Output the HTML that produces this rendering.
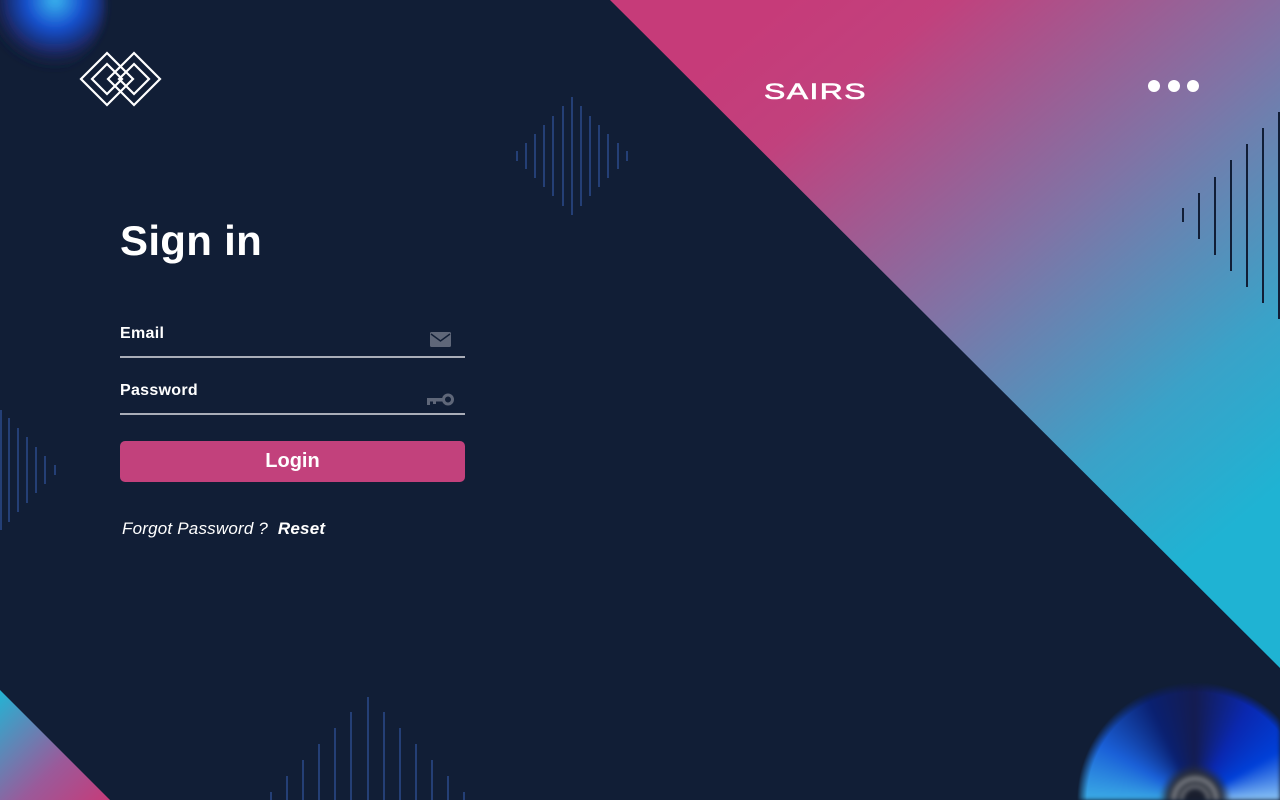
<!DOCTYPE html>
<html><head><meta charset="utf-8"><style>
*{margin:0;padding:0;box-sizing:border-box}
html,body{width:1280px;height:800px;overflow:hidden}
body{background:#111e36;font-family:"Liberation Sans",sans-serif;color:#fff}
#w{position:relative;width:1280px;height:800px;overflow:hidden;background:#111e36}
.abs{position:absolute}
svg{position:absolute;left:0;top:0}
.label{position:absolute;left:120px;font-size:16px;font-weight:bold;letter-spacing:0.3px}
.line{position:absolute;left:120px;width:345px;height:2px;background:#a9adb8}
#disc{left:1070px;top:675px;width:210px;height:125px;
background:radial-gradient(circle at 125px 125px,#1a1f2e 0 10px,#70737a 13px,#2a2f3a 17px,#80838a 21px,#2a2f3a 26px,rgba(26,32,64,0) 36px),
conic-gradient(from 0deg at 125px 125px,#141c50 0deg,#0a28b0 30deg,#0040d8 60deg,#b8f0ff 100deg,#e0f8ff 130deg,#60c8f0 180deg,#c050d0 230deg,#40b8e8 265deg,#1a60d8 300deg,#0a2070 335deg,#141c50 360deg);
-webkit-mask-image:radial-gradient(circle at 125px 125px,#000 108px,transparent 118px);
mask-image:radial-gradient(circle at 125px 125px,#000 108px,transparent 118px);filter:blur(2px)}
</style></head><body><div id="w">
<svg width="1280" height="800" viewBox="0 0 1280 800">
<defs>
<linearGradient id="g1" gradientUnits="userSpaceOnUse" x1="800" y1="-10" x2="1240" y2="520">
<stop offset="0" stop-color="#c63b79"/><stop offset="0.15" stop-color="#c1417d"/><stop offset="0.5" stop-color="#7f74a6"/><stop offset="0.8" stop-color="#3aa2c8"/><stop offset="1" stop-color="#1fb3d3"/>
</linearGradient>
<linearGradient id="g2" x1="0" y1="0" x2="1" y2="1">
<stop offset="0" stop-color="#22b4d4"/><stop offset="0.6" stop-color="#9a5a9a"/><stop offset="1" stop-color="#c63b79"/>
</linearGradient>
<radialGradient id="tl" cx="55" cy="0" r="70" gradientUnits="userSpaceOnUse">
<stop offset="0" stop-color="#3ab8ee"/><stop offset="0.4" stop-color="#1850d0"/><stop offset="0.75" stop-color="#1a2660"/><stop offset="1" stop-color="#111e36" stop-opacity="0"/>
</radialGradient>
<filter id="bl"><feGaussianBlur stdDeviation="4"/></filter>
</defs>
<polygon points="610,0 1280,0 1280,668" fill="url(#g1)"/>
<polygon points="0,690 110,800 0,800" fill="url(#g2)"/>
<circle cx="35" cy="5" r="70" fill="url(#tl)" filter="url(#bl)"/>
<g stroke="#2b4a8c" stroke-width="1.5">
<line x1="517" y1="151" x2="517" y2="161"/><line x1="526" y1="143" x2="526" y2="169"/><line x1="535" y1="134" x2="535" y2="178"/><line x1="544" y1="125" x2="544" y2="187"/><line x1="553" y1="116" x2="553" y2="196"/><line x1="563" y1="106" x2="563" y2="206"/><line x1="572" y1="97" x2="572" y2="215"/><line x1="581" y1="106" x2="581" y2="206"/><line x1="590" y1="116" x2="590" y2="196"/><line x1="599" y1="125" x2="599" y2="187"/><line x1="608" y1="134" x2="608" y2="178"/><line x1="618" y1="143" x2="618" y2="169"/><line x1="627" y1="151" x2="627" y2="161"/>
<line x1="1" y1="410" x2="1" y2="530"/><line x1="9" y1="418" x2="9" y2="522"/><line x1="18" y1="428" x2="18" y2="512"/><line x1="27" y1="437" x2="27" y2="503"/><line x1="36" y1="447" x2="36" y2="493"/><line x1="45" y1="456" x2="45" y2="484"/><line x1="55" y1="465" x2="55" y2="475"/>
<line x1="271" y1="792" x2="271" y2="800"/><line x1="287" y1="776" x2="287" y2="800"/><line x1="303" y1="760" x2="303" y2="800"/><line x1="319" y1="744" x2="319" y2="800"/><line x1="335" y1="728" x2="335" y2="800"/><line x1="351" y1="712" x2="351" y2="800"/><line x1="368" y1="697" x2="368" y2="800"/><line x1="384" y1="712" x2="384" y2="800"/><line x1="400" y1="728" x2="400" y2="800"/><line x1="416" y1="744" x2="416" y2="800"/><line x1="432" y1="760" x2="432" y2="800"/><line x1="448" y1="776" x2="448" y2="800"/><line x1="464" y1="792" x2="464" y2="800"/>
</g>
<g stroke="#111e36" stroke-width="2">
<line x1="1183" y1="208" x2="1183" y2="222"/><line x1="1199" y1="193" x2="1199" y2="239"/><line x1="1215" y1="177" x2="1215" y2="255"/><line x1="1231" y1="160" x2="1231" y2="271"/><line x1="1247" y1="144" x2="1247" y2="287"/><line x1="1263" y1="128" x2="1263" y2="303"/><line x1="1279" y1="112" x2="1279" y2="319"/>
</g>
<g fill="none" stroke="#fff" stroke-width="2.2">
<polygon points="107,53 133,79 107,105 81,79"/>
<polygon points="107,64 122,79 107,94 92,79"/>
<polygon points="134,53 160,79 134,105 108,79"/>
<polygon points="134,64 149,79 134,94 119,79"/>
</g>
<g fill="#ffffff">
<circle cx="1154" cy="86" r="6"/><circle cx="1174" cy="86" r="6"/><circle cx="1193" cy="86" r="6"/>
</g>
<rect x="430" y="332" width="21" height="15" rx="1.5" fill="#5f6779"/>
<polyline points="431,334 440.5,341 450,334" fill="none" stroke="#111e36" stroke-width="1.5"/>
<g fill="#5f6779">
<rect x="427" y="398" width="16" height="3.5"/><rect x="427" y="398" width="3" height="7"/><rect x="433" y="398" width="3" height="6"/>
</g>
<circle cx="448" cy="399.5" r="4.5" fill="none" stroke="#5f6779" stroke-width="3"/>
</svg>
<div class="abs" id="disc"></div>
<div class="abs" style="left:764px;top:80px;font-size:22px;letter-spacing:1px;transform:scaleX(1.45);transform-origin:left;line-height:24px;-webkit-text-stroke:0.6px #fff">SAIRS</div>
<div class="abs" style="left:120px;top:216px;font-size:42px;font-weight:bold;letter-spacing:0.3px;line-height:50px">Sign in</div>
<div class="label" style="top:325px">Email</div>
<div class="line" style="top:356px"></div>
<div class="label" style="top:382px">Password</div>
<div class="line" style="top:413px"></div>
<div class="abs" style="left:120px;top:441px;width:345px;height:41px;border-radius:5px;background:#c2417c;text-align:center;font-weight:bold;font-size:20px;line-height:41px">Login</div>
<div class="abs" style="left:122px;top:519px;font-size:17px;font-style:italic;line-height:20px;letter-spacing:0.2px">Forgot Password ? &nbsp;<b>Reset</b></div>
</div></body></html>
